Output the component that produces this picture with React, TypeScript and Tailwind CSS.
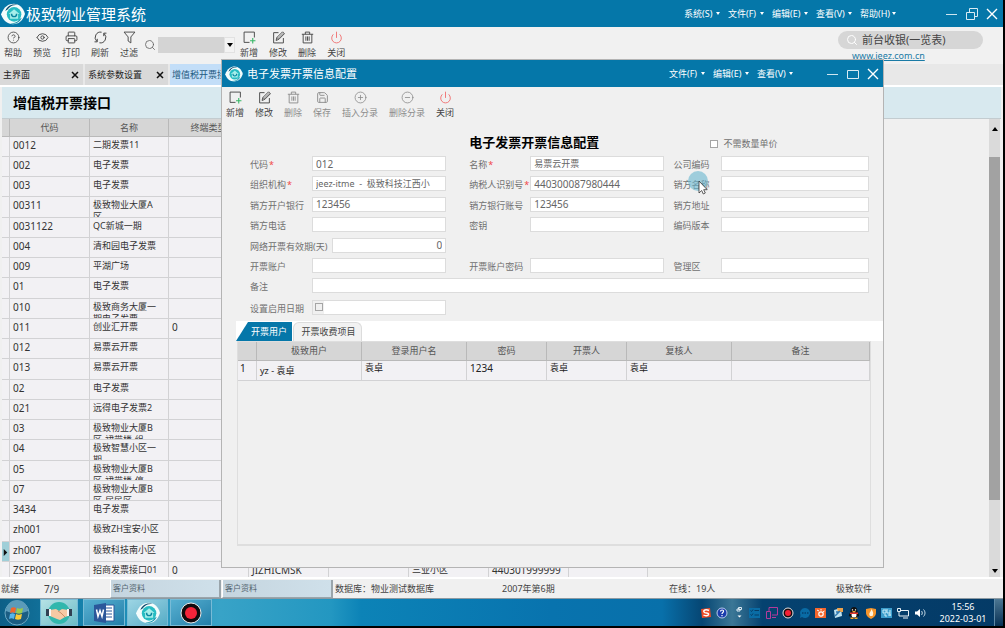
import React from "react";
import {
  CircleHelp,
  CircleMinus,
  CirclePlus,
  Eye,
  Power,
  Printer,
  Save,
  Search,
} from "lucide-react";

type IconProps = { className?: string };

const AddIcon = ({ className }: IconProps) => (
  <svg viewBox="0 0 24 24" fill="none" className={className}>
    <path d="M12 21H2V2h19v10" stroke="currentColor" strokeWidth="1.7" />
    <path d="M18 13v10M13 18h10" stroke="#35b765" strokeWidth="2" />
  </svg>
);

const EditIcon = ({ className }: IconProps) => (
  <svg viewBox="0 0 24 24" fill="none" stroke="currentColor" className={className}>
    <path d="M12 3H3v19h18v-9" strokeWidth="1.7" />
    <path d="M7.500 17.500l1.500-5.500L19.500 1.500l3.500 3.500L12.500 15.500z" strokeWidth="1.700" />
    <path d="M9 12l4 3.500M11 14L21 4" strokeWidth="1.300" />
  </svg>
);

const TrashIcon = ({ className }: IconProps) => (
  <svg viewBox="0 0 24 24" fill="none" stroke="currentColor" strokeWidth="1.700" className={className}>
    <path d="M1.500 6h21M8 6V2h8v4M4 6v16h16V6M9 10v8M12 10v8M15 10v8" />
  </svg>
);

const RefreshIcon = ({ className }: IconProps) => (
  <svg viewBox="0 0 24 24" fill="none" stroke="currentColor" strokeWidth="1.800" className={className}>
    <path d="M14 2.200A10 10 0 0 0 5 19M6 14.500V20H1" />
    <path d="M10 21.800A10 10 0 0 0 19 5M18 9.500V4h5" />
  </svg>
);

const FilterIcon = ({ className }: IconProps) => (
  <svg viewBox="0 0 24 24" fill="none" stroke="currentColor" strokeWidth="1.700" className={className}>
    <path d="M2 2h20l-7.500 9v11l-5-3.500V11z" />
  </svg>
);

const Logo = ({ className }: IconProps) => (
  <svg viewBox="0 0 66 60" className={className}>
    <path d="M0 31C8 10 21 2 35 2s27 11 31 28C59 50 48 58 33 58S7 50 0 31z" fill="#f4fcfc" />
    <circle cx="36" cy="31" r="20" fill="#27bcc2" />
    <path d="M12 22C17 8 29 1 45 5c-14 0-21 4-26 12z" fill="#0a4a6c" />
    <path d="M57 40C51 54 39 59 25 56c14 0 21-4 26-12z" fill="#0f93ac" />
    <path d="M21 30l15-13 15 13h-4v13H25V30z" fill="#a5eeea" />
    <path d="M29 29c0 11 14 11 14 0" fill="none" stroke="#0b86a0" strokeWidth="4" />
  </svg>
);

const ToolButton = ({
  icon,
  label,
  muted,
}: {
  icon: React.ReactNode;
  label: string;
  muted?: boolean;
}) => (
  <button
    className={`flex flex-col items-center gap-[3px] text-[9px] leading-3 whitespace-nowrap ${
      muted ? "text-[#8c8c8c]" : "text-[#444]"
    }`}
  >
    {icon}
    {label}
  </button>
);

const iconSize = "size-[13px]";

const Menu = ({ items }: { items: string[] }) => (
  <nav className="flex gap-2">
    {items.map((item) => (
      <button
        key={item}
        className="flex w-9 items-center justify-between text-[9px] leading-3 whitespace-nowrap text-white"
      >
        {item}
        <svg viewBox="0 0 4 3" className="h-[3px] w-1 shrink-0">
          <path d="M0 0h4L2 3z" fill="#fff" />
        </svg>
      </button>
    ))}
  </nav>
);

const WindowButtons = ({ restore }: { restore?: boolean }) => (
  <div className="flex items-center gap-2 text-white">
    <button aria-label="最小化">
      <svg viewBox="0 0 12 12" className="size-3">
        <path d="M0 6.500h11" stroke="#cfe6f0" />
      </svg>
    </button>
    <button aria-label={restore ? "还原" : "最大化"}>
      <svg viewBox="0 0 12 12" fill="none" stroke="#d9ebf3" className="size-3">
        {restore ? (
          <path d="M.5 4.500h8v7h-8zM3.500 4.500v-4h8v8h-3" />
        ) : (
          <path d="M.5 2.500h11v8H.5z" />
        )}
      </svg>
    </button>
    <button aria-label="关闭窗口">
      <svg viewBox="0 0 12 12" className="size-3">
        <path d="M1 1l10 10M11 1L1 11" stroke="#fff" strokeWidth="1.400" />
      </svg>
    </button>
  </div>
);

const rows = [
  ["0012", "二期发票11", ""],
  ["002", "电子发票", ""],
  ["003", "电子发票", ""],
  ["00311", "极致物业大厦A\n区", ""],
  ["0031122", "QC新城一期", ""],
  ["004", "清和园电子发票", ""],
  ["009", "平湖广场", ""],
  ["01", "电子发票", ""],
  ["010", "极致商务大厦一\n期电子发票", ""],
  ["011", "创业汇开票", "0"],
  ["012", "易票云开票", ""],
  ["013", "易票云开票", ""],
  ["02", "电子发票", ""],
  ["021", "远得电子发票2", ""],
  ["03", "极致物业大厦B\n区-裙带楼-组", ""],
  ["04", "极致智慧小区一\n期", ""],
  ["05", "极致物业大厦B\n区-裙带楼-停", ""],
  ["07", "极致物业大厦B\n区-居民区", ""],
  ["3434", "电子发票", ""],
  ["zh001", "极致ZH宝安小区", ""],
  ["zh007", "极致科技南小区", ""],
  ["ZSFP001", "招商发票接口01", "0", "JIZHICMSK", "", "三业小区", "440301999999", "", ""],
];

const cell = "border-r border-b border-[#d2d2d4] p-0 align-top";
const headCell = "border-r border-b border-[#b9b9b9] p-0 font-normal";

const MainTable = () => (
  <div className="min-h-0 min-w-0 flex-1 overflow-hidden pl-[2px]">
    <table className="w-[646px] table-fixed border-separate border-spacing-0 text-[#333]">
      <colgroup>
        <col className="w-2" />
        <col className="w-20" />
        <col className="w-[79px]" />
        <col className="w-20" />
        <col className="w-20" />
        <col className="w-20" />
        <col className="w-20" />
        <col className="w-20" />
        <col />
      </colgroup>
      <thead>
        <tr className="h-[18px] bg-[#d6d6d6] text-[9px] leading-4 text-[#555]">
          {["", "代码", "名称", "终端类型", "终端编号", "", "", "", ""].map((head, i) => (
            <th key={i} className={headCell}>
              {head}
            </th>
          ))}
        </tr>
      </thead>
      <tbody>
        {rows.map((row, i) => (
          <tr key={row[0]} className="bg-[#f2f1f4]">
            <td className={`${cell} ${row[0] === "zh007" ? "bg-[#9fcfd8]" : ""}`}>
              {row[0] === "zh007" && (
                <svg viewBox="0 0 8 20" className="h-[19px] w-[7px]">
                  <path d="M2 7l4 4-4 4z" fill="#111" />
                </svg>
              )}
            </td>
            {[0, 1, 2, 3, 4, 5, 6, 7].map((c) => (
              <td key={c} className={cell}>
                <div
                  className={`overflow-hidden pt-[2px] pl-[3px] leading-3 whitespace-pre ${
                    i % 4 === 3 ? "h-5" : "h-[19px]"
                  } ${c === 1 || c === 5 ? "text-[9px]" : "text-[10px]"}`}
                >
                  {row[c] ?? ""}
                </div>
              </td>
            ))}
          </tr>
        ))}
      </tbody>
    </table>
  </div>
);

const fieldBox =
  "h-[15px] w-full min-w-0 rounded-none border border-[#dcdcdc] bg-white px-[3px] leading-3 text-[#666] outline-none";

const Field = ({
  id,
  label,
  value = "",
  required,
  labelClass = "",
  inputClass = "text-[10px]",
}: {
  id: string;
  label: string;
  value?: string;
  required?: boolean;
  labelClass?: string;
  inputClass?: string;
}) => (
  <>
    <label htmlFor={id} className={`pt-[3px] text-[9px] leading-3 whitespace-nowrap text-[#707070] ${labelClass}`}>
      {label}
      {required && <span className="ml-px text-[#f04848]">*</span>}
    </label>
    <input id={id} defaultValue={value} className={`${fieldBox} ${inputClass}`} />
  </>
);

const second = "pl-[23px]";
const third = "pl-[9px]";
const formGrid = "grid grid-cols-[62px_1fr_84px_1fr_57px_1.1fr]";

const DialogForm = () => (
  <form className="pr-[14px] pl-7">
    <div className={`${formGrid} h-[22px] items-center`}>
      <h2 className="col-span-2 col-start-3 pl-[23px] text-[13px] leading-4 font-bold whitespace-nowrap text-black">
        电子发票开票信息配置
      </h2>
      <label className="col-span-2 flex items-center gap-[5px] pt-1 pl-[46px] text-[9px] leading-3 text-[#707070]">
        <input type="checkbox" className="size-2 appearance-none border border-[#a5a5a5] bg-white" />
        不需数量单价
      </label>
    </div>
    <div className={`${formGrid} mt-[3px] h-[163px] grid-rows-8`}>
      <Field id="code" label="代码" value="012" required />
      <Field id="name" label="名称" value="易票云开票" required labelClass={second} inputClass="text-[9px]" />
      <Field id="company" label="公司编码" labelClass={third} />

      <Field id="org" label="组织机构" value="jeez-itme  -  极致科技江西小" required inputClass="text-[9px] text-[#2b4c4c]" />
      <Field id="tax" label="纳税人识别号" value="440300087980444" required labelClass={second} />
      <Field id="seller" label="销方名称" labelClass={third} />

      <Field id="bank" label="销方开户银行" value="123456" />
      <Field id="account" label="销方银行账号" value="123456" labelClass={second} />
      <Field id="address" label="销方地址" labelClass={third} />

      <Field id="phone" label="销方电话" />
      <Field id="secret" label="密钥" labelClass={second} />
      <Field id="version" label="编码版本" labelClass={third} />

      <div className="col-span-2 flex gap-[5px]">
        <Field id="days" label="网络开票有效期(天)" value="0" inputClass="text-right text-[10px]" />
      </div>
      <div className="col-span-4" />

      <Field id="user" label="开票账户" />
      <Field id="password" label="开票账户密码" labelClass={second} />
      <Field id="area" label="管理区" labelClass={third} />

      <Field id="remark" label="备注" inputClass="col-span-5" />

      <label htmlFor="start" className="pt-1 text-[9px] leading-3 whitespace-nowrap text-[#707070]">
        设置启用日期
      </label>
      <div className="mt-px flex h-[15px] items-center border border-[#dcdcdc] bg-white">
        <span className="flex h-full w-[11px] items-center justify-center bg-[#f0f0f0]">
          <input id="start" type="checkbox" className="size-2 appearance-none border border-[#a5a5a5]" />
        </span>
      </div>
    </div>
  </form>
);

const UserTable = () => (
  <table className="w-full table-fixed border-separate border-spacing-0">
    <colgroup>
      <col className="w-[19px]" />
      <col className="w-[105px]" />
      <col className="w-[105px]" />
      <col className="w-20" />
      <col className="w-20" />
      <col className="w-[105px]" />
      <col />
    </colgroup>
    <thead>
      <tr className="h-[19px] bg-[#d6d6d6] text-[9px] leading-4 text-[#555]">
        {["", "极致用户", "登录用户名", "密码", "开票人", "复核人", "备注"].map((head, i) => (
          <th key={i} className={headCell}>
            {head}
          </th>
        ))}
      </tr>
    </thead>
    <tbody>
      <tr className="h-5 bg-[#f2f1f4] text-[9px] leading-[14px] text-[#222]">
        <td className={`${cell} pl-[2px] text-[10px]`}>1</td>
        <td className={`${cell} pt-[3px] pl-[3px]`}>yz - 袁卓</td>
        <td className={`${cell} pl-[3px]`}>袁卓</td>
        <td className={`${cell} pl-[3px] text-[10px]`}>1234</td>
        <td className={`${cell} pl-[3px]`}>袁卓</td>
        <td className={`${cell} pl-[3px]`}>袁卓</td>
        <td className={cell} />
      </tr>
    </tbody>
  </table>
);

const Dialog = () => (
  <section
    role="dialog"
    aria-label="电子发票开票信息配置"
    className="absolute top-[59px] right-[119px] bottom-[58px] left-[221px] flex flex-col border border-[#b4b4b4] bg-[#f0f0f0]"
  >
    <header className="flex h-[27px] shrink-0 items-center bg-[#0577a9] pr-1 pl-[3px]">
      <Logo className="h-4 w-[18px]" />
      <span className="ml-1 text-[11px] leading-4 text-white">电子发票开票信息配置</span>
      <div className="mr-[34px] ml-auto">
        <Menu items={["文件(F)", "编辑(E)", "查看(V)"]} />
      </div>
      <WindowButtons />
    </header>
    <div className="flex h-11 shrink-0 items-start gap-[11px] pt-1 pl-1">
      <ToolButton icon={<AddIcon className={iconSize} />} label="新增" />
      <ToolButton icon={<EditIcon className={iconSize} />} label="修改" />
      <ToolButton icon={<TrashIcon className={iconSize} />} label="删除" muted />
      <ToolButton icon={<Save className={iconSize} strokeWidth={1.7} />} label="保存" muted />
      <ToolButton icon={<CirclePlus className={iconSize} strokeWidth={1.5} />} label="插入分录" muted />
      <ToolButton icon={<CircleMinus className={iconSize} strokeWidth={1.5} />} label="删除分录" muted />
      <ToolButton icon={<Power className="size-[13px] text-[#f07070]" strokeWidth={1.7} />} label="关闭" />
    </div>
    <DialogForm />
    <div role="tablist" className="mt-[2px] ml-[14px] flex h-5 shrink-0 items-end bg-white">
      <button
        role="tab"
        aria-selected="true"
        className="h-[19px] w-14 bg-[#0577a9] pl-[10px] text-[9px] leading-[18px] text-white [clip-path:polygon(0_100%,12px_0,100%_0,100%_100%)]"
      >
        开票用户
      </button>
      <button
        role="tab"
        aria-selected="false"
        className="ml-px h-[19px] w-[69px] rounded-t-md border border-b-0 border-[#dcdcdc] bg-[#f2f2f2] pl-[2px] text-[9px] leading-[18px] whitespace-nowrap text-[#444]"
      >
        开票收费项目
      </button>
    </div>
    <div className="mr-3 mb-[21px] ml-[15px] min-h-0 flex-1 border border-b-2 border-[#dedede]">
      <UserTable />
    </div>
  </section>
);

const MainToolbar = () => (
  <div className="flex h-[37px] shrink-0 items-start justify-between bg-[#f1f1f1] pt-1 pr-5 pl-1">
    <div className="flex gap-[11px]">
      <ToolButton icon={<CircleHelp className={iconSize} strokeWidth={1.5} />} label="帮助" />
      <ToolButton icon={<Eye className={iconSize} strokeWidth={1.7} />} label="预览" />
      <ToolButton icon={<Printer className={iconSize} strokeWidth={1.7} />} label="打印" />
      <ToolButton icon={<RefreshIcon className={iconSize} />} label="刷新" />
      <ToolButton icon={<FilterIcon className={iconSize} />} label="过滤" />
      <div className="-ml-[5px] flex h-[27px] items-center gap-[2px]">
        <Search className="size-3 text-[#666]" strokeWidth={1.7} />
        <div className="flex h-4 w-[77px] bg-[#d4d4d4]">
          <select aria-label="查询条件" className="h-4 min-w-0 flex-1 appearance-none bg-transparent text-[9px]" />
          <span className="flex w-[11px] items-center justify-center border border-[#e2e2e2] bg-[#f3f3f3]">
            <svg viewBox="0 0 6 4" className="h-1 w-[6px]">
              <path d="M0 0h6L3 4z" />
            </svg>
          </span>
        </div>
      </div>
      <div className="-ml-[6px] flex gap-[11px]">
        <ToolButton icon={<AddIcon className={iconSize} />} label="新增" />
        <ToolButton icon={<EditIcon className={iconSize} />} label="修改" />
        <ToolButton icon={<TrashIcon className={iconSize} />} label="删除" />
        <ToolButton icon={<Power className="size-[13px] text-[#f07070]" strokeWidth={1.7} />} label="关闭" />
      </div>
    </div>
    <div className="flex flex-col items-start">
      <label className="flex h-[18px] w-[145px] items-center gap-1 rounded-full bg-[#d6d6d6] pr-3 pl-2">
        <Search className="size-3 shrink-0 text-white" strokeWidth={2} />
        <input
          aria-label="功能搜索"
          defaultValue="前台收银(一览表)"
          className="h-4 w-full min-w-0 bg-transparent text-[11px] text-[#444] outline-none"
        />
      </label>
      <a href="#jeez" className="mt-px ml-[14px] text-[9px] leading-3 text-[#1a7ba6] underline">
        www.jeez.com.cn
      </a>
    </div>
  </div>
);

const PageTabs = () => (
  <div className="flex h-[23px] shrink-0 items-center gap-[2px] border-b-2 border-white bg-[#e8e8e8] text-[9px] leading-3 text-[#222]">
    {["主界面", "系统参数设置"].map((tab) => (
      <div key={tab} className="flex h-full w-[83px] items-center justify-between bg-[#d9d9d9] pt-px pr-1 pl-[3px]">
        <button>{tab}</button>
        <button aria-label={`关闭${tab}`}>
          <svg viewBox="0 0 8 8" className="size-2">
            <path d="M1 1l6 6M7 1L1 7" stroke="#111" strokeWidth="1.500" />
          </svg>
        </button>
      </div>
    ))}
    <button className="h-full w-[83px] bg-[#c3def8] pt-px pl-[2px] text-left whitespace-nowrap text-[#225a80]">
      增值税开票接口
    </button>
  </div>
);

const Scrollbar = () => (
  <div className="mr-[3px] flex w-[11px] shrink-0 flex-col items-center bg-[#dadada] pt-2 pb-1">
    <svg viewBox="0 0 6 4" className="h-1 w-[6px]">
      <path d="M0 4h6L3 0z" />
    </svg>
    <div className="mt-[26px] mb-[69px] w-full flex-1 bg-[#a2a2a2]" />
    <svg viewBox="0 0 6 4" className="h-1 w-[6px]">
      <path d="M0 0h6L3 4z" />
    </svg>
  </div>
);

const StatusBar = () => (
  <footer className="flex h-[22px] shrink-0 items-center border-t-2 border-b border-t-white border-b-[#8d9aa2] bg-[#f0f0f0] text-[9px] leading-3 whitespace-nowrap text-[#444]">
    <span className="w-11 pl-px">就绪</span>
    <span className="w-[66px] text-[10px]">7/9</span>
    {[1, 2].map((n) => (
      <button
        key={n}
        className="mr-px h-[18px] w-[111px] border-r-2 border-b border-l border-[#9aa5ab] border-l-white bg-linear-to-r from-[#c5d5df] to-[#cfe0ea] pl-[2px] text-left text-[8px] text-[#536470]"
      >
        客户资料
      </button>
    ))}
    <div className="grid flex-1 grid-cols-[1fr_1fr_1fr_1fr] pl-px">
      <span>数据库：物业测试数据库</span>
      <span>2007年第6期</span>
      <span>在线：19人</span>
      <span>极致软件</span>
    </div>
  </footer>
);

const trayIcons = [
  <svg key="s" viewBox="0 0 12 12" className="size-3">
    <path d="M1 2l9-1 1 9-9 1z" fill="#ee4a25" />
    <path d="M9 3.500C6 2 3 3 4 5s5 0 4.500 2.500C8 9 5 9 3.500 8" fill="none" stroke="#fff" strokeWidth="1.500" />
  </svg>,
  <svg key="help" viewBox="0 0 12 12" className="size-3">
    <circle cx="6" cy="6" r="5" fill="#1b3dad" stroke="#b8cbe8" />
    <path d="M4.500 4.500c0-2 3.500-2 3 0C7.300 5.500 6 5.500 6 7M6 8v1.200" fill="none" stroke="#fff" strokeWidth="1.200" />
  </svg>,
  <svg key="lang" viewBox="0 0 12 12" className="size-3">
    <path d="M5.500.5h3v2h-3zM4 2h3v2H4z" fill="none" stroke="#dceaf2" />
    <path d="M4.500 8.500h4l-2 2z" fill="#fff" />
  </svg>,
  <svg key="list" viewBox="0 0 12 12" className="size-3">
    <path d="M0 1h11v10H0z" fill="#0a6ca5" />
    <path d="M1.500 3.500l1 1 1.500-2M5.500 3.500H10M1.500 7.500l1 1 1.500-2M5.500 8H10" fill="none" stroke="#053c66" />
  </svg>,
  <svg key="screen" viewBox="0 0 12 12" className="size-3" fill="none" stroke="#b43b9b">
    <path d="M3 4V.5h8.500V8H6M.5 4.500h4v7h-4zM6 10.500h4" />
  </svg>,
  <svg key="rec" viewBox="0 0 12 12" className="size-3">
    <circle cx="6" cy="6" r="5" fill="#170b0d" stroke="#e4e4e4" />
    <circle cx="6" cy="6" r="3" fill="#f32135" />
  </svg>,
  <svg key="chat" viewBox="0 0 12 12" className="size-3">
    <path d="M6 1a5 5 0 1 1-3 9l-2 1 .5-3A5 5 0 0 1 6 1z" fill="#096ba5" />
    <path d="M3 6h1.500M5.500 6H7M8 6h1.500" stroke="#04406f" strokeWidth="1.300" />
  </svg>,
  <svg key="sun" viewBox="0 0 12 12" className="size-3">
    <path d="M0 1h11v10H0z" fill="#f3662d" />
    <circle cx="6" cy="7" r="2.200" fill="none" stroke="#fff" strokeWidth="1.200" />
    <path d="M2 3l2 1M6 2v1.500M9.500 4L8 5" stroke="#fff" />
  </svg>,
  <svg key="paint" viewBox="0 0 12 12" className="size-3">
    <path d="M2 3l7-2 1 8-7 2z" fill="#bfe3f2" />
    <path d="M5 1h6v4H6z" fill="#eea24b" />
    <path d="M3 9l5-5M4 5h3" stroke="#337ab0" strokeWidth="1.500" />
  </svg>,
  <svg key="qq" viewBox="0 0 12 12" className="size-3">
    <path d="M6 0c3 0 3.500 3 3.500 5 1 1.500 2 3 1.500 4.500L9.500 9C9 11 8 11.500 6 11.500S3 11 2.500 9L1 9.500C.5 8 1.500 6.500 2.500 5c0-2 .5-5 3.500-5z" fill="#111" />
    <ellipse cx="6" cy="8" rx="2.500" ry="2.500" fill="#fff" />
    <path d="M2 5.500h8v1.500H2z" fill="#e8382f" />
    <path d="M4.500 4.500h3" stroke="#f2a52b" />
    <path d="M2.500 11.200h3M6.500 11.200h3" stroke="#f2a52b" strokeWidth="1.500" />
    <path d="M4.500 2.200v1.200M7.500 2.200v1.200" stroke="#fff" strokeWidth="1.200" />
  </svg>,
  <svg key="shield" viewBox="0 0 12 12" className="size-3">
    <path d="M1 2l5-1 5 1v4c0 3-3 5-5 6-2-1-5-3-5-6z" fill="#f6952b" />
    <path d="M6.500 2C8 5 9 6 7.500 9H5C3 6 6 5 6.500 2z" fill="#fff4dc" />
  </svg>,
  <svg key="net" viewBox="0 0 12 12" className="size-3">
    <path d="M0 1h11v10H0z" fill="#3c9dcc" />
    <path d="M2 3h3v3H2zM6 2v4h3M3 8h2v2M7 8h3M9 3v6" fill="none" stroke="#c9ecf8" />
  </svg>,
  <svg key="lan" viewBox="0 0 12 12" className="size-3" fill="none" stroke="#e8f0f5">
    <path d="M4 3.500h7.500v5.500H4M6 11h5M.5 1.500h3v3h-3zM2 4.500V9h2" />
  </svg>,
  <svg key="vol" viewBox="0 0 12 12" className="size-3">
    <path d="M1 4.500h2L6 2v8L3 7.500H1z" fill="#fff" />
    <path d="M7.500 4c1 1 1 3 0 4M9.500 2.500c2 2 2 5 0 7" fill="none" stroke="#c7dce8" />
  </svg>,
];

const taskButton =
  "flex h-[27px] items-center justify-center border border-[#78bbd6] bg-linear-to-br";

const Taskbar = () => (
  <div className="flex h-[27px] shrink-0 items-center bg-[linear-gradient(90deg,#0d5f87_0%,#1788b3_10%,#38a3c7_22%,#2397c1_33%,#0c83b7_36%,#0873ae_55%,#0870aa_66%,#064673_70%,#3b7796_73%,#054270_76%,#043a66_100%)]">
    <button aria-label="开始" className="ml-1">
      <svg viewBox="0 0 26 26" className="size-[26px]">
        <circle cx="13" cy="13" r="12" fill="#1b5d83" stroke="#6aa8c4" />
        <path d="M2 11a11 11 0 0 1 22 0c-7 3-15 3-22 0z" fill="#5b9bb9" />
        <path d="M7 8c2-1 3-1 5 0l-1 5c-2-1-3-1-5 0z" fill="#f0652c" />
        <path d="M13 8c2 1 3 1 6 0l-1 5c-2 1-4 1-6 0z" fill="#9bcb4c" />
        <path d="M6 14c2-1 3-1 5 0l-1 5c-2-1-3-1-5 0z" fill="#58b5ea" />
        <path d="M12 14c2 1 3 1 6 0l-1 5c-2 1-4 1-6 0z" fill="#fbc936" />
      </svg>
    </button>
    <div className="ml-[10px] flex">
      <button aria-label="远程协助" className={`${taskButton} w-[38px] from-[#b6e2e5] to-[#69bcc7]`}>
        <svg viewBox="0 0 26 24" className="h-6 w-[26px]">
          <circle cx="13" cy="12" r="11" fill="#31b7ad" />
          <path d="M4 9l6-1 3 2 3-2 6 1v6l-3 1-5 3-3-1-7-3z" fill="#f6c9a4" />
          <path d="M12 10l3 2 4 4" fill="none" stroke="#cf8f69" />
          <path d="M2 8h3v7H2zM21 8h3v7h-3z" fill="#f7f7f7" />
          <path d="M0 8h3v7H0zM23 8h3v7h-3z" fill="#314153" />
        </svg>
      </button>
      <button aria-label="Word" className={`${taskButton} ml-[5px] w-[42px] from-[#57b0d1] to-[#217fa9]`}>
        <svg viewBox="0 0 22 22" className="size-[22px]">
          <path d="M11 3h10v16H11z" fill="#fff" stroke="#2b579a" />
          <path d="M13 6h6M13 9h6M13 12h6M13 15h6" stroke="#2b579a" />
          <path d="M1 3l12-2v20L1 19z" fill="#2b579a" />
          <path d="M3.500 7.500l1.500 7 2-6 2 6 1.500-7" fill="none" stroke="#fff" strokeWidth="1.500" />
        </svg>
      </button>
      <button aria-label="物业管理系统" className={`${taskButton} ml-[2px] w-[41px] from-[#9dd5e4] to-[#55acc6]`}>
        <Logo className="h-[22px] w-6" />
      </button>
      <button aria-label="录屏" className={`${taskButton} ml-[2px] w-[42px] from-[#57b0d1] to-[#217fa9]`}>
        <svg viewBox="0 0 22 22" className="size-[22px]">
          <circle cx="11" cy="11" r="10" fill="#120b0e" stroke="#e9e9e9" />
          <circle cx="11" cy="11" r="6" fill="#f5243a" />
        </svg>
      </button>
    </div>
    <div className="ml-auto flex w-[226px] items-center justify-between">{trayIcons}</div>
    <div className="ml-3 w-[50px] text-center text-[9px] leading-3 whitespace-nowrap text-white">
      <div>15:56</div>
      <div>2022-03-01</div>
    </div>
    <button aria-label="显示桌面" className="ml-[6px] h-[27px] w-[9px] border-l border-[#5d88a5] bg-linear-to-b from-[#4c7793] to-[#053154]" />
  </div>
);

const Pointer = () => (
  <svg viewBox="0 0 22 26" className="pointer-events-none absolute top-[170px] left-[687px] h-[26px] w-[22px]">
    <circle cx="11" cy="11" r="10" fill="#67b6cf" fillOpacity=".6" />
    <path d="M12 11v12l2.700-2.500 1.600 3.500 2-1-1.600-3.300h3.500z" fill="#fff" stroke="#333" strokeWidth=".8" />
  </svg>
);

export default function App() {
  return (
    <div
      lang="zh-CN"
      className="flex h-screen flex-col overflow-hidden bg-black pr-[2px] pb-[2px] font-['Noto_Sans','Noto_Sans_CJK_SC',sans-serif]"
    >
      <main className="relative flex min-h-0 flex-1 flex-col bg-[#f0f0f0]">
        <header className="flex h-[27px] shrink-0 items-center bg-[#0577a9] pr-[5px] pl-[1px]">
          <Logo className="h-[22px] w-6" />
          <h1 className="ml-px text-[15px] leading-5 text-white">极致物业管理系统</h1>
          <div className="mr-[50px] ml-auto">
            <Menu items={["系统(S)", "文件(F)", "编辑(E)", "查看(V)", "帮助(H)"]} />
          </div>
          <WindowButtons restore />
        </header>
        <MainToolbar />
        <PageTabs />
        <div className="mx-[2px] flex h-8 shrink-0 items-center border-b border-[#c3ccd0] bg-[#d8e9ef] pt-px pl-[11px]">
          <h2 className="text-[14px] leading-5 font-bold text-black">增值税开票接口</h2>
        </div>
        <div className="flex min-h-0 flex-1">
          <MainTable />
          <Scrollbar />
        </div>
        <StatusBar />
        <Taskbar />
        <Dialog />
        <Pointer />
      </main>
    </div>
  );
}
